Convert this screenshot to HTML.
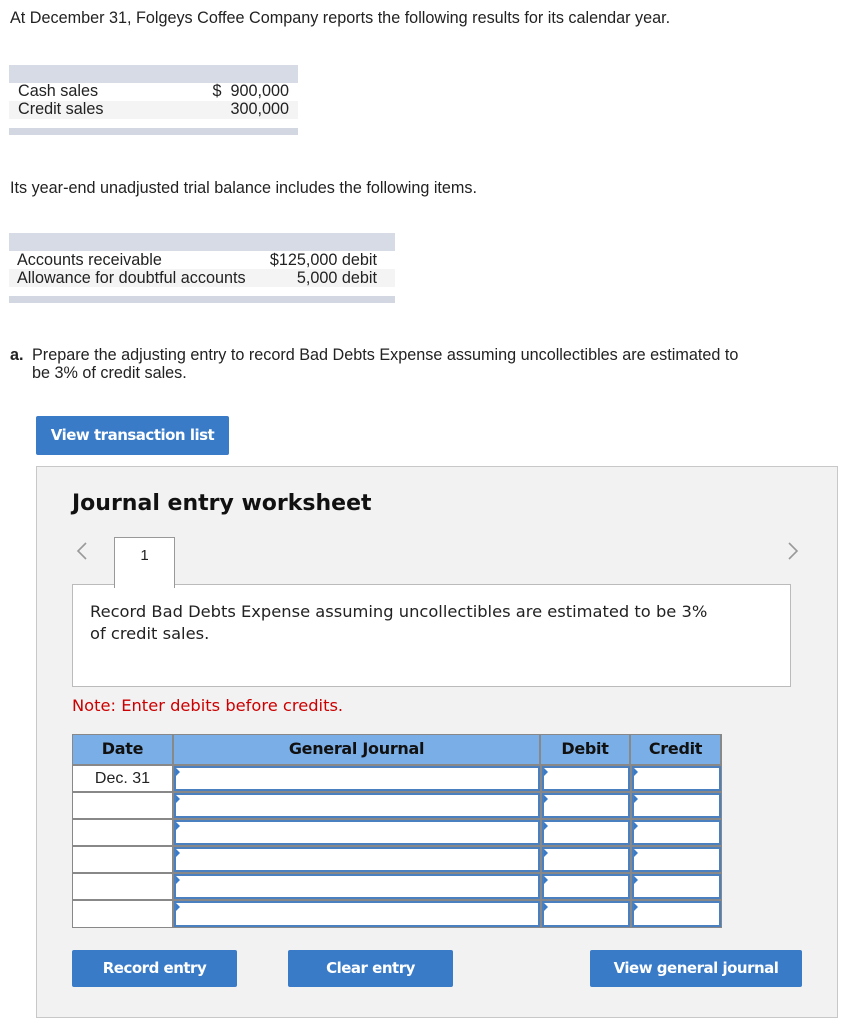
<!DOCTYPE html>
<html><head><style>
body{margin:0;width:860px;height:1024px;background:#fff;position:relative;font-family:"Liberation Sans",Arial,sans-serif;color:#222;overflow:hidden}
.a{position:absolute}
.t{font-size:16.2px}
.v{font-family:"DejaVu Sans",Verdana,sans-serif}
.btn{position:absolute;background:#3a7bc8;color:#fff;font-family:"DejaVu Sans",Verdana,sans-serif;font-weight:bold;font-size:15px;text-align:center;border-radius:2px;letter-spacing:-0.5px}
.cell{position:absolute;box-sizing:border-box}
.in{position:absolute;background:#fff;border:2px solid #4a7fc0;box-sizing:border-box}
.in:before{content:"";position:absolute;left:0;top:0;border-left:4px solid #3a7bc8;border-top:4px solid transparent;border-bottom:4px solid transparent}
.h{position:absolute;box-sizing:border-box;background:#7aaee6;font-family:"DejaVu Sans",Verdana,sans-serif;font-weight:bold;font-size:16px;text-align:center;line-height:28px;color:#111;letter-spacing:-0.3px}
</style></head><body>
<div class="a t" style="left:10px;top:9px">At December 31, Folgeys Coffee Company reports the following results for its calendar year.</div>

<div class="a" style="left:9px;top:65px;width:289px;height:18px;background:#d7dbe6"></div>
<div class="a" style="left:9px;top:101px;width:289px;height:18px;background:#f4f4f4"></div>
<div class="a" style="left:9px;top:128px;width:289px;height:7px;background:#d3d7e2"></div>
<div class="a t" style="left:18px;top:82px;line-height:18px">Cash sales<br>Credit sales</div>
<div class="a t" style="left:180px;top:82px;width:109px;text-align:right;line-height:18px">$&nbsp; 900,000<br>300,000</div>

<div class="a t" style="left:10px;top:179px">Its year-end unadjusted trial balance includes the following items.</div>
<div class="a" style="left:9px;top:233px;width:386px;height:18px;background:#d7dbe6"></div>
<div class="a" style="left:9px;top:269px;width:386px;height:18px;background:#f4f4f4"></div>
<div class="a" style="left:9px;top:296px;width:386px;height:7px;background:#d3d7e2"></div>
<div class="a t" style="left:17px;top:251px;line-height:18px">Accounts receivable<br>Allowance for doubtful accounts</div>
<div class="a t" style="left:240px;top:251px;width:137px;text-align:right;line-height:18px">$125,000 debit<br>5,000 debit</div>

<div class="a t" style="left:10px;top:346px;line-height:18px"><b>a.</b></div>
<div class="a t" style="left:32px;top:346px;line-height:18px;width:760px">Prepare the adjusting entry to record Bad Debts Expense assuming uncollectibles are estimated to<br>be 3% of credit sales.</div>

<div class="btn" style="left:36px;top:416px;width:193px;height:39px;line-height:39px">View transaction list</div>

<div class="a" style="left:36px;top:466px;width:800px;height:550px;background:#f2f2f2;border:1px solid #c8c8c8"></div>
<div class="a v" style="left:72px;top:491px;font-size:22px;font-weight:bold;color:#111">Journal entry worksheet</div>
<svg class="a" style="left:76px;top:542px" width="12" height="18"><path d="M10 1 L2 9 L10 17" fill="none" stroke="#999" stroke-width="1.6"/></svg>
<svg class="a" style="left:787px;top:542px" width="12" height="18"><path d="M2 1 L10 9 L2 17" fill="none" stroke="#999" stroke-width="1.6"/></svg>
<div class="a" style="left:114px;top:537px;width:59px;height:50px;background:#fff;border:1px solid #999;border-bottom:none;text-align:center;line-height:36px;font-size:15px;z-index:2">1</div>
<div class="a v" style="left:72px;top:584px;width:719px;height:103px;background:#fff;border:1px solid #bbb;box-sizing:border-box;padding:16px 17px;font-size:16.3px;line-height:22px">Record Bad Debts Expense assuming uncollectibles are estimated to be 3%<br>of credit sales.</div>
<div class="a v" style="left:72px;top:696px;font-size:16.3px;color:#c00">Note: Enter debits before credits.</div>

<div class="a" style="left:72px;top:734px;width:650px;height:194px;background:#888"></div>
<div class="h" style="left:73px;top:735px;width:99px;height:29px">Date</div>
<div class="h" style="left:174px;top:735px;width:365px;height:29px">General Journal</div>
<div class="h" style="left:541px;top:735px;width:88px;height:29px">Debit</div>
<div class="h" style="left:631px;top:735px;width:89px;height:29px">Credit</div>

<div class="cell" style="left:73px;top:766px;width:99px;height:25px;background:#fff;text-align:center;line-height:25px;font-size:16px">Dec. 31</div>
<div class="cell" style="left:73px;top:793px;width:99px;height:25px;background:#fff"></div>
<div class="cell" style="left:73px;top:820px;width:99px;height:25px;background:#fff"></div>
<div class="cell" style="left:73px;top:847px;width:99px;height:25px;background:#fff"></div>
<div class="cell" style="left:73px;top:874px;width:99px;height:25px;background:#fff"></div>
<div class="cell" style="left:73px;top:901px;width:99px;height:26px;background:#fff"></div>

<div class="in" style="left:174px;top:766px;width:366px;height:25px"></div><div class="in" style="left:542px;top:766px;width:88px;height:25px"></div><div class="in" style="left:632px;top:766px;width:89px;height:25px"></div>
<div class="in" style="left:174px;top:793px;width:366px;height:25px"></div><div class="in" style="left:542px;top:793px;width:88px;height:25px"></div><div class="in" style="left:632px;top:793px;width:89px;height:25px"></div>
<div class="in" style="left:174px;top:820px;width:366px;height:25px"></div><div class="in" style="left:542px;top:820px;width:88px;height:25px"></div><div class="in" style="left:632px;top:820px;width:89px;height:25px"></div>
<div class="in" style="left:174px;top:847px;width:366px;height:25px"></div><div class="in" style="left:542px;top:847px;width:88px;height:25px"></div><div class="in" style="left:632px;top:847px;width:89px;height:25px"></div>
<div class="in" style="left:174px;top:874px;width:366px;height:25px"></div><div class="in" style="left:542px;top:874px;width:88px;height:25px"></div><div class="in" style="left:632px;top:874px;width:89px;height:25px"></div>
<div class="in" style="left:174px;top:901px;width:366px;height:26px"></div><div class="in" style="left:542px;top:901px;width:88px;height:26px"></div><div class="in" style="left:632px;top:901px;width:89px;height:26px"></div>

<div class="btn" style="left:72px;top:950px;width:165px;height:37px;line-height:37px">Record entry</div>
<div class="btn" style="left:288px;top:950px;width:165px;height:37px;line-height:37px">Clear entry</div>
<div class="btn" style="left:590px;top:950px;width:212px;height:37px;line-height:37px">View general journal</div>
</body></html>
